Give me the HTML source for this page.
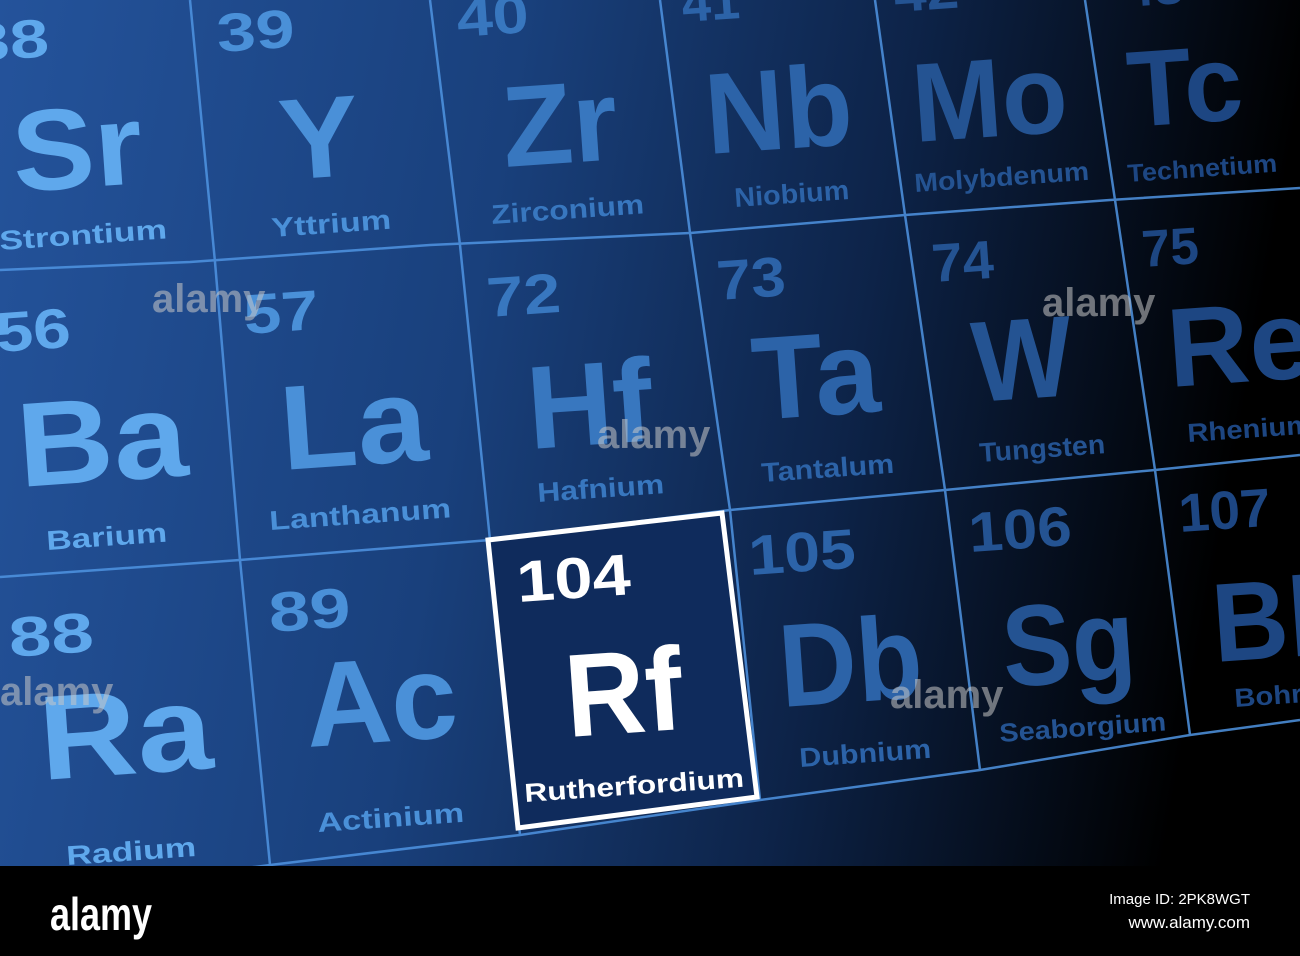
<!DOCTYPE html>
<html><head><style>
html,body{margin:0;padding:0;background:#000;}
svg{display:block}
text{font-family:"Liberation Sans",sans-serif;font-weight:bold}
</style></head><body>
<svg width="1300" height="956" viewBox="0 0 1300 956" xmlns="http://www.w3.org/2000/svg">
<defs>
<linearGradient id="bg" x1="0" y1="0" x2="1" y2="0.12">
<stop offset="0" stop-color="#24539b"/>
<stop offset="0.4" stop-color="#19407c"/>
<stop offset="0.7" stop-color="#0d2348"/>
<stop offset="1" stop-color="#000"/>
</linearGradient>
</defs>
<rect width="1300" height="866" fill="url(#bg)"/>
<g stroke="#4f94e2" stroke-width="2.5" fill="none" opacity="0.85">
<polyline points="0,270 190,262 430,245 690,233 905,215 1110,200 1300,188"/>
<polyline points="0,577 240,560 490,540 730,510 945,490 1155,470 1300,455"/>
<polyline points="0,900 270,865 520,835 760,800 980,770 1190,735 1300,720"/>
<polyline points="190,0 215,262 240,560 270,865"/>
<polyline points="430,0 460,245 490,540 520,835"/>
<polyline points="660,0 690,233 730,510 760,800"/>
<polyline points="875,0 905,215 945,490 980,770"/>
<polyline points="1085,0 1115,200 1155,470 1190,735"/>
</g>
<polygon points="488,540 722,513 757,797 518,828" fill="#0f2b5c" stroke="#fff" stroke-width="5"/>
<g lengthAdjust="spacingAndGlyphs">
<g fill="#5fa8ec">
<text x="-28" y="60" font-size="54" textLength="78" lengthAdjust="spacingAndGlyphs" transform="rotate(-4 -5 60)">38</text>
<text x="15" y="192" font-size="115" textLength="130" lengthAdjust="spacingAndGlyphs" transform="rotate(-4 15 192)">Sr</text>
<text x="0" y="250" font-size="27" textLength="168" lengthAdjust="spacingAndGlyphs" transform="rotate(-4 0 250)">Strontium</text>
<text x="-3" y="352" font-size="56" textLength="75" lengthAdjust="spacingAndGlyphs" transform="rotate(-4 -3 352)">56</text>
<text x="20" y="487" font-size="120" textLength="170" lengthAdjust="spacingAndGlyphs" transform="rotate(-4 20 487)">Ba</text>
<text x="47" y="550" font-size="27" textLength="121" lengthAdjust="spacingAndGlyphs" transform="rotate(-4 47 550)">Barium</text>
<text x="10" y="657" font-size="56" textLength="85" lengthAdjust="spacingAndGlyphs" transform="rotate(-4 10 657)">88</text>
<text x="42" y="780" font-size="120" textLength="173" lengthAdjust="spacingAndGlyphs" transform="rotate(-4 42 780)">Ra</text>
<text x="67" y="865" font-size="27" textLength="130" lengthAdjust="spacingAndGlyphs" transform="rotate(-4 67 865)">Radium</text>
</g>
<g fill="#4a90d8">
<text x="218" y="52" font-size="54" textLength="78" lengthAdjust="spacingAndGlyphs" transform="rotate(-4 218 52)">39</text>
<text x="282" y="180" font-size="115" textLength="80" lengthAdjust="spacingAndGlyphs" transform="rotate(-4 282 180)">Y</text>
<text x="272" y="237" font-size="27" textLength="120" lengthAdjust="spacingAndGlyphs" transform="rotate(-4 272 237)">Yttrium</text>
<text x="245" y="334" font-size="56" textLength="75" lengthAdjust="spacingAndGlyphs" transform="rotate(-4 245 334)">57</text>
<text x="283" y="470" font-size="120" textLength="147" lengthAdjust="spacingAndGlyphs" transform="rotate(-4 283 470)">La</text>
<text x="270" y="530" font-size="27" textLength="182" lengthAdjust="spacingAndGlyphs" transform="rotate(-4 270 530)">Lanthanum</text>
<text x="270" y="632" font-size="56" textLength="82" lengthAdjust="spacingAndGlyphs" transform="rotate(-4 270 632)">89</text>
<text x="308" y="747" font-size="120" textLength="152" lengthAdjust="spacingAndGlyphs" transform="rotate(-4 308 747)">Ac</text>
<text x="318" y="832" font-size="27" textLength="147" lengthAdjust="spacingAndGlyphs" transform="rotate(-4 318 832)">Actinium</text>
</g>
<g fill="#3877bf">
<text x="458" y="37" font-size="54" textLength="72" lengthAdjust="spacingAndGlyphs" transform="rotate(-4 458 37)">40</text>
<text x="505" y="167" font-size="115" textLength="115" lengthAdjust="spacingAndGlyphs" transform="rotate(-4 505 167)">Zr</text>
<text x="492" y="224" font-size="27" textLength="153" lengthAdjust="spacingAndGlyphs" transform="rotate(-4 492 224)">Zirconium</text>
<text x="488" y="317" font-size="56" textLength="74" lengthAdjust="spacingAndGlyphs" transform="rotate(-4 488 317)">72</text>
<text x="530" y="449" font-size="118" textLength="125" lengthAdjust="spacingAndGlyphs" transform="rotate(-4 530 449)">Hf</text>
<text x="538" y="502" font-size="27" textLength="127" lengthAdjust="spacingAndGlyphs" transform="rotate(-4 538 502)">Hafnium</text>
</g>
<g fill="#fff">
<text x="518" y="602" font-size="58" textLength="114" lengthAdjust="spacingAndGlyphs" transform="rotate(-4 518 602)">104</text>
<text x="568" y="737" font-size="118" textLength="117" lengthAdjust="spacingAndGlyphs" transform="rotate(-4 568 737)">Rf</text>
<text x="525" y="802" font-size="26" textLength="220" lengthAdjust="spacingAndGlyphs" transform="rotate(-4 525 802)">Rutherfordium</text>
</g>
<g fill="#2c63a8">
<text x="683" y="22" font-size="54" textLength="58" lengthAdjust="spacingAndGlyphs" transform="rotate(-4 683 22)">41</text>
<text x="708" y="154" font-size="115" textLength="147" lengthAdjust="spacingAndGlyphs" transform="rotate(-4 708 154)">Nb</text>
<text x="735" y="207" font-size="27" textLength="115" lengthAdjust="spacingAndGlyphs" transform="rotate(-4 735 207)">Niobium</text>
<text x="718" y="300" font-size="56" textLength="69" lengthAdjust="spacingAndGlyphs" transform="rotate(-4 718 300)">73</text>
<text x="755" y="420" font-size="118" textLength="127" lengthAdjust="spacingAndGlyphs" transform="rotate(-4 755 420)">Ta</text>
<text x="762" y="482" font-size="27" textLength="133" lengthAdjust="spacingAndGlyphs" transform="rotate(-4 762 482)">Tantalum</text>
<text x="750" y="575" font-size="56" textLength="107" lengthAdjust="spacingAndGlyphs" transform="rotate(-4 750 575)">105</text>
<text x="782" y="707" font-size="118" textLength="143" lengthAdjust="spacingAndGlyphs" transform="rotate(-4 782 707)">Db</text>
<text x="800" y="767" font-size="27" textLength="132" lengthAdjust="spacingAndGlyphs" transform="rotate(-4 800 767)">Dubnium</text>
</g>
<g fill="#245392">
<text x="895" y="12" font-size="54" textLength="65" lengthAdjust="spacingAndGlyphs" transform="rotate(-4 895 12)">42</text>
<text x="915" y="142" font-size="112" textLength="155" lengthAdjust="spacingAndGlyphs" transform="rotate(-4 915 142)">Mo</text>
<text x="915" y="192" font-size="26" textLength="175" lengthAdjust="spacingAndGlyphs" transform="rotate(-4 915 192)">Molybdenum</text>
<text x="933" y="282" font-size="54" textLength="62" lengthAdjust="spacingAndGlyphs" transform="rotate(-4 933 282)">74</text>
<text x="975" y="402" font-size="115" textLength="100" lengthAdjust="spacingAndGlyphs" transform="rotate(-4 975 402)">W</text>
<text x="980" y="462" font-size="27" textLength="126" lengthAdjust="spacingAndGlyphs" transform="rotate(-4 980 462)">Tungsten</text>
<text x="970" y="552" font-size="56" textLength="103" lengthAdjust="spacingAndGlyphs" transform="rotate(-4 970 552)">106</text>
<text x="1005" y="687" font-size="115" textLength="133" lengthAdjust="spacingAndGlyphs" transform="rotate(-4 1005 687)">Sg</text>
<text x="1000" y="742" font-size="26" textLength="167" lengthAdjust="spacingAndGlyphs" transform="rotate(-4 1000 742)">Seaborgium</text>
</g>
<g fill="#1d4682">
<text x="1125" y="7" font-size="52" textLength="60" lengthAdjust="spacingAndGlyphs" transform="rotate(-4 1125 7)">43</text>
<text x="1130" y="127" font-size="108" textLength="115" lengthAdjust="spacingAndGlyphs" transform="rotate(-4 1130 127)">Tc</text>
<text x="1128" y="182" font-size="25" textLength="150" lengthAdjust="spacingAndGlyphs" transform="rotate(-4 1128 182)">Technetium</text>
<text x="1143" y="267" font-size="52" textLength="57" lengthAdjust="spacingAndGlyphs" transform="rotate(-4 1143 267)">75</text>
<text x="1170" y="387" font-size="112" textLength="145" lengthAdjust="spacingAndGlyphs" transform="rotate(-4 1170 387)">Re</text>
<text x="1188" y="442" font-size="26" textLength="125" lengthAdjust="spacingAndGlyphs" transform="rotate(-4 1188 442)">Rhenium</text>
<text x="1180" y="532" font-size="54" textLength="92" lengthAdjust="spacingAndGlyphs" transform="rotate(-4 1180 532)">107</text>
<text x="1215" y="662" font-size="112" textLength="140" lengthAdjust="spacingAndGlyphs" transform="rotate(-4 1215 662)">Bh</text>
<text x="1235" y="707" font-size="26" textLength="120" lengthAdjust="spacingAndGlyphs" transform="rotate(-4 1235 707)">Bohrium</text>
</g>
</g>
<g fill="#c8c8c8" opacity="0.55" font-size="40">
<text x="152" y="312">alamy</text>
<text x="1042" y="316">alamy</text>
<text x="597" y="448">alamy</text>
<text x="0" y="705">alamy</text>
<text x="890" y="708">alamy</text>
</g>
<rect y="866" width="1300" height="90" fill="#000"/>
<text x="50" y="930" font-size="46" fill="#fff" textLength="102" lengthAdjust="spacingAndGlyphs">alamy</text>
<text x="1250" y="904" font-size="15" fill="#fff" text-anchor="end" style="font-weight:normal">Image ID: 2PK8WGT</text>
<text x="1250" y="928" font-size="17" fill="#fff" text-anchor="end" style="font-weight:normal">www.alamy.com</text>
</svg>
</body></html>
